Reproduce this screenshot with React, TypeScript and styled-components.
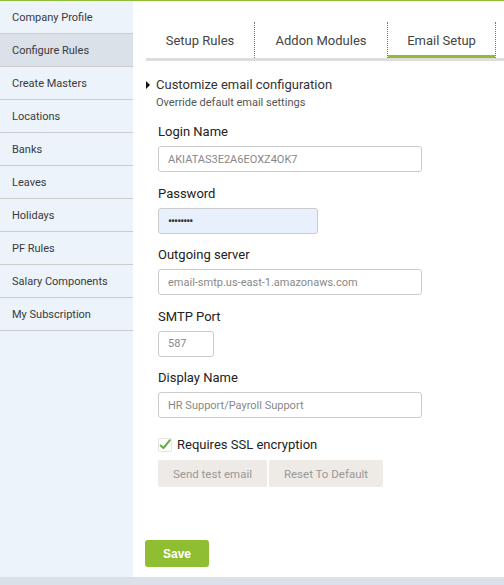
import React from 'react';
import styled, { createGlobalStyle } from 'styled-components';

const GlobalStyle = createGlobalStyle`
  html, body {
    margin: 0;
    padding: 0;
    background: #ffffff;
    font-family: Roboto, "Liberation Sans", sans-serif;
  }
  * { box-sizing: border-box; }
`;

const Page = styled.div`
  width: 504px;
  height: 585px;
  display: flex;
  flex-direction: column;
  border-top: 1px solid #8fbe32;
  overflow: hidden;
`;

const Body = styled.div`
  flex: 1;
  display: flex;
  min-height: 0;
`;

const BottomStrip = styled.div`
  height: 8px;
  background: #dae1e8;
`;

const Sidebar = styled.aside`
  width: 133px;
  background: #ecf3fb;
  display: flex;
  flex-direction: column;
`;

const SideItem = styled.div<{ $active?: boolean }>`
  height: 33px;
  display: flex;
  align-items: center;
  padding: 0 12px;
  font-size: 11px;
  color: #3a3a3a;
  background: ${({ $active }) => ($active ? '#dae1e8' : 'transparent')};
  border-bottom: 1px solid #cccccc;
`;

const Main = styled.main`
  flex: 1;
  display: flex;
  flex-direction: column;
  padding: 21px 0 10px 13px;
`;

const Tabs = styled.div`
  display: flex;
  border-bottom: 3px solid #dddddd;
`;

const Tab = styled.div<{ $active?: boolean; $w: number }>`
  width: ${({ $w }) => $w}px;
  height: 36px;
  display: flex;
  align-items: center;
  justify-content: center;
  font-size: 13px;
  color: #444;
  border-right: 1px dotted #777;
  box-shadow: ${({ $active }) => ($active ? 'inset 0 -3px 0 #8fbe32' : 'none')};
`;

const Section = styled.div`
  margin-top: 15px;
  display: flex;
  flex-direction: column;
`;

const SectionTitle = styled.div`
  display: flex;
  align-items: center;
  gap: 6px;
  font-size: 13px;
  color: #333;
  line-height: 18px;
`;

const Caret = styled.span`
  width: 0;
  height: 0;
  border-top: 4px solid transparent;
  border-bottom: 4px solid transparent;
  border-left: 4px solid #111;
`;

const SectionSub = styled.div`
  margin: 2px 0 0 10px;
  font-size: 11px;
  color: #555;
  line-height: 14px;
`;

const Form = styled.div`
  display: flex;
  flex-direction: column;
  gap: 12.5px;
  padding-left: 12px;
  margin-top: 13px;
`;

const Field = styled.div`
  display: flex;
  flex-direction: column;
`;

const Label = styled.label`
  font-size: 13px;
  line-height: 18px;
  color: #222;
  margin-bottom: 5px;
`;

const Input = styled.div<{ $w: number; $filled?: boolean }>`
  width: ${({ $w }) => $w}px;
  height: 26px;
  border: 1px solid #cccccc;
  border-radius: 3px;
  background: ${({ $filled }) => ($filled ? '#e8f0fe' : '#fff')};
  display: flex;
  align-items: center;
  padding: 0 9px;
  font-size: 11px;
  color: #888;
`;

const Dots = styled.span`
  color: #333;
  font-size: 12px;
  letter-spacing: -1px;
`;

const CheckRow = styled.div`
  display: flex;
  align-items: center;
  gap: 5px;
  margin-top: 19px;
  padding-left: 12px;
  font-size: 13px;
  color: #222;
`;

const CheckBox = styled.span`
  width: 14px;
  height: 14px;
  display: flex;
  align-items: center;
  justify-content: center;
  border: 1px solid #e4e4e4;
  border-radius: 2px;
`;

const Buttons = styled.div`
  display: flex;
  gap: 2px;
  margin-top: 8px;
  padding-left: 12px;
`;

const GreyButton = styled.button<{ $w: number }>`
  width: ${({ $w }) => $w}px;
  height: 27px;
  border: none;
  border-radius: 2px;
  background: #eeeae6;
  color: #999;
  font-family: inherit;
  font-size: 11.5px;
`;

const Spacer = styled.div`
  flex: 1;
`;

const SaveButton = styled.button`
  width: 64px;
  height: 27px;
  margin-left: -1px;
  border: none;
  border-radius: 3px;
  background: #8fbe32;
  color: #fff;
  font-family: "Liberation Sans", Arial, sans-serif;
  font-weight: 700;
  font-size: 12px;
`;

const sideItems = [
  'Company Profile',
  'Configure Rules',
  'Create Masters',
  'Locations',
  'Banks',
  'Leaves',
  'Holidays',
  'PF Rules',
  'Salary Components',
  'My Subscription',
];

const CheckIcon = () => (
  <svg width="14" height="14" viewBox="0 0 14 14">
    <path d="M2 7.5 L5.2 10.5 L12.5 1.5" fill="none" stroke="#5fb04a" strokeWidth="2.4" strokeLinecap="round" strokeLinejoin="round" />
  </svg>
);

export default function App() {
  return (
    <>
      <GlobalStyle />
      <Page>
        <Body>
          <Sidebar>
            {sideItems.map((s) => (
              <SideItem key={s} $active={s === 'Configure Rules'}>{s}</SideItem>
            ))}
          </Sidebar>
          <Main>
            <Tabs>
              <Tab $w={109}>Setup Rules</Tab>
              <Tab $w={133}>Addon Modules</Tab>
              <Tab $w={108} $active>Email Setup</Tab>
            </Tabs>
            <Section>
              <SectionTitle><Caret />Customize email configuration</SectionTitle>
              <SectionSub>Override default email settings</SectionSub>
            </Section>
            <Form>
              <Field>
                <Label>Login Name</Label>
                <Input $w={264}>AKIATAS3E2A6EOXZ4OK7</Input>
              </Field>
              <Field>
                <Label>Password</Label>
                <Input $w={160} $filled><Dots>••••••••</Dots></Input>
              </Field>
              <Field>
                <Label>Outgoing server</Label>
                <Input $w={264}>email-smtp.us-east-1.amazonaws.com</Input>
              </Field>
              <Field>
                <Label>SMTP Port</Label>
                <Input $w={56}>587</Input>
              </Field>
              <Field>
                <Label>Display Name</Label>
                <Input $w={264}>HR Support/Payroll Support</Input>
              </Field>
            </Form>
            <CheckRow><CheckBox><CheckIcon /></CheckBox>Requires SSL encryption</CheckRow>
            <Buttons>
              <GreyButton $w={109}>Send test email</GreyButton>
              <GreyButton $w={114}>Reset To Default</GreyButton>
            </Buttons>
            <Spacer />
            <SaveButton>Save</SaveButton>
          </Main>
        </Body>
        <BottomStrip />
      </Page>
    </>
  );
}
